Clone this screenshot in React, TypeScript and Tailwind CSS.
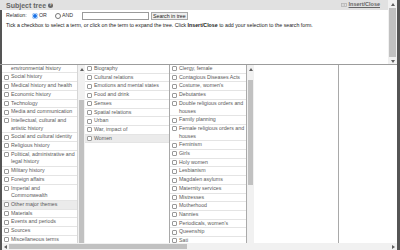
import React, { useLayoutEffect, useRef } from 'react';

type Term = { label: string; active?: boolean };

const col1: Term[] = [
  { label: 'Landscape and\nenvironmental history' },
  { label: 'Social history' },
  { label: 'Medical history and health' },
  { label: 'Economic history' },
  { label: 'Technology' },
  { label: 'Media and communication' },
  { label: 'Intellectual, cultural and\nartistic history' },
  { label: 'Social and cultural identity' },
  { label: 'Religious history' },
  { label: 'Political, administrative and\nlegal history' },
  { label: 'Military history' },
  { label: 'Foreign affairs' },
  { label: 'Imperial and\nCommonwealth' },
  { label: 'Other major themes', active: true },
  { label: 'Materials' },
  { label: 'Events and periods' },
  { label: 'Sources' },
  { label: 'Miscellaneous terms' },
];

const col2: Term[] = [
  { label: 'Biography' },
  { label: 'Cultural relations' },
  { label: 'Emotions and mental states' },
  { label: 'Food and drink' },
  { label: 'Senses' },
  { label: 'Spatial relations' },
  { label: 'Urban' },
  { label: 'War, impact of' },
  { label: 'Women', active: true },
];

const col3: Term[] = [
  { label: 'Clergy, female' },
  { label: 'Contagious Diseases Acts' },
  { label: "Costume, women's" },
  { label: 'Debutantes' },
  { label: 'Double religious orders and\nhouses' },
  { label: 'Family planning' },
  { label: 'Female religious orders and\nhouses' },
  { label: 'Feminism' },
  { label: 'Girls' },
  { label: 'Holy women' },
  { label: 'Lesbianism' },
  { label: 'Magdalen asylums' },
  { label: 'Maternity services' },
  { label: 'Mistresses' },
  { label: 'Motherhood' },
  { label: 'Nannies' },
  { label: "Periodicals, women's" },
  { label: 'Queenship' },
  { label: 'Sati' },
  { label: 'Sexuality' },
];

const Arrow: React.FC<{ dir: 'up' | 'down' | 'left' | 'right' }> = ({ dir }) => {
  const pts = {
    up: '0,3 2,0 4,3',
    down: '0,0 4,0 2,3',
    left: '3,0 3,4 0,2',
    right: '0,0 0,4 3,2',
  }[dir];
  const vertical = dir === 'up' || dir === 'down';
  return (
    <svg width={vertical ? 4 : 3} height={vertical ? 3 : 4} viewBox={vertical ? '0 0 4 3' : '0 0 3 4'}>
      <polygon points={pts} fill="#5f5f5f" />
    </svg>
  );
};

// thumbStart/thumbSize in px, measured from the end of the up arrow
const VScroll: React.FC<{ thumbStart: number; thumbSize: number; showDown?: boolean; className?: string }> = ({
  thumbStart,
  thumbSize,
  showDown,
  className = '',
}) => (
  <div className={`flex flex-col bg-[#f1f1f1] shrink-0 ${className}`}>
    <div className="h-[8px] flex items-center justify-center shrink-0">
      <Arrow dir="up" />
    </div>
    <div className="shrink-0" style={{ height: thumbStart }} />
    <div className="bg-[#c1c1c1] mx-[1px] shrink-0" style={{ height: thumbSize }} />
    <div className="flex-1" />
    {showDown && (
      <div className="h-[8px] flex items-center justify-center shrink-0">
        <Arrow dir="down" />
      </div>
    )}
  </div>
);

const Checkbox = () => (
  <span className="mt-[1.4px] w-[5px] h-[5px] shrink-0 rounded-[1px] border border-[#9a9a9a] bg-white" />
);

const TermList: React.FC<{ terms: Term[]; scroll?: number }> = ({ terms, scroll = 0 }) => {
  const ref = useRef<HTMLDivElement>(null);
  useLayoutEffect(() => {
    if (ref.current) ref.current.scrollTop = scroll;
  }, [scroll]);

  return (
    <div ref={ref} className="flex-1 overflow-hidden">
      {terms.map((t) => (
        <div
          key={t.label}
          className={`flex items-start gap-[2px] pl-[2px] border-b border-[#e4e4e4] ${t.active ? 'bg-[#ebebeb]' : ''}`}
        >
          <Checkbox />
          <span className="whitespace-pre leading-[7.7px] text-[5.25px] text-[#5a5a5a]">{t.label}</span>
        </div>
      ))}
    </div>
  );
};

const Radio: React.FC<{ checked?: boolean }> = ({ checked }) =>
  checked ? (
    <span className="w-[6px] h-[6px] rounded-full bg-[#1a73e8] flex items-center justify-center">
      <span className="w-[3.4px] h-[3.4px] rounded-full bg-[#1a73e8] ring-[0.8px] ring-white" />
    </span>
  ) : (
    <span className="w-[6px] h-[6px] rounded-full border border-[#767676] bg-white" />
  );

export default function App() {
  return (
    <div className="w-[400px] h-[250px] overflow-hidden bg-white flex font-['Liberation_Sans',Arial,sans-serif] text-[#333]">
      <div className="flex-1 flex flex-col min-w-0">
        {/* form pane */}
        <div className="h-[65px] flex border-b border-[#9c9c9c] shrink-0">
          <div className="flex-1 flex flex-col min-w-0">
            <div className="h-[10px] bg-[#e1e1e1] flex items-center justify-between pl-[6px] pr-[8px]">
              <div className="flex items-center gap-[2px]">
                <span className="text-[7px] font-bold text-[#666] leading-none">Subject tree</span>
                <span className="w-[5px] h-[5px] rounded-full bg-[#666] text-white text-[4px] font-bold leading-none flex items-center justify-center">
                  ?
                </span>
              </div>
              <div className="flex items-center gap-[2px]">
                <svg width="6" height="4" viewBox="0 0 6 4">
                  <rect x="0.5" y="0.5" width="5" height="3" fill="none" stroke="#b5b5b5" strokeWidth="0.8" />
                  <path d="M1.5 2h2.5M3 1l1 1-1 1" fill="none" stroke="#b5b5b5" strokeWidth="0.6" />
                </svg>
                <span className="text-[5.5px] font-bold underline text-[#666] leading-none">Insert/Close</span>
              </div>
            </div>
            <div className="flex-1 border-l-2 border-[#555] pl-[4px] pt-[2px]">
              <div className="flex items-center h-[8px] text-[5.25px]">
                <span className="w-[26px]">Relation:</span>
                <Radio checked />
                <span className="ml-[1px] w-[16px]">OR</span>
                <Radio />
                <span className="ml-[1px] w-[20px]">AND</span>
                <span className="w-[67px] h-[8px] border border-[#9a9a9a] bg-white" />
                <span className="ml-[2px] h-[8px] px-[1px] border border-[#a8a8a8] bg-[#efefef] text-[#222] leading-[6px] whitespace-nowrap">
                  Search in tree
                </span>
              </div>
              <p className="mt-[2px] text-[5.25px] leading-[7px] text-[#222] whitespace-nowrap">
                Tick a checkbox to select a term, or click on the term to expand the tree. Click{' '}
                <b>Insert/Close</b> to add your selection to the search form.
              </p>
            </div>
          </div>
          <VScroll thumbStart={0} thumbSize={49} showDown className="w-[9px]" />
        </div>

        {/* tree pane */}
        <div className="flex-1 flex flex-col border-l-2 border-[#555] min-h-0">
          <div className="flex-1 flex min-h-0 overflow-hidden">
            <div className="w-[83px] flex shrink-0">
              <TermList terms={col1} scroll={8} />
              <VScroll thumbStart={27} thumbSize={200} className="w-[8px] border-l border-[#d6d6d6]" />
            </div>
            <div className="w-[85px] flex shrink-0 border-r border-[#a9a9a9]">
              <TermList terms={col2} />
            </div>
            <div className="w-[84px] flex shrink-0">
              <TermList terms={col3} />
              <VScroll thumbStart={7} thumbSize={105} className="w-[8px] border-l border-[#a9a9a9]" />
            </div>
            <div className="w-[85px] shrink-0 border-r border-[#a9a9a9]" />
            <div className="flex-1" />
          </div>
          <div className="h-[7px] flex bg-[#f1f1f1] shrink-0">
            <div className="w-[7px] flex items-center justify-center shrink-0">
              <Arrow dir="left" />
            </div>
            <div className="w-[178px] bg-[#c1c1c1] my-[1px] shrink-0" />
            <div className="flex-1" />
            <div className="w-[8px] flex items-center justify-center shrink-0">
              <Arrow dir="right" />
            </div>
          </div>
        </div>
      </div>
      <div className="w-[3px] bg-[#555] shrink-0" />
    </div>
  );
}
